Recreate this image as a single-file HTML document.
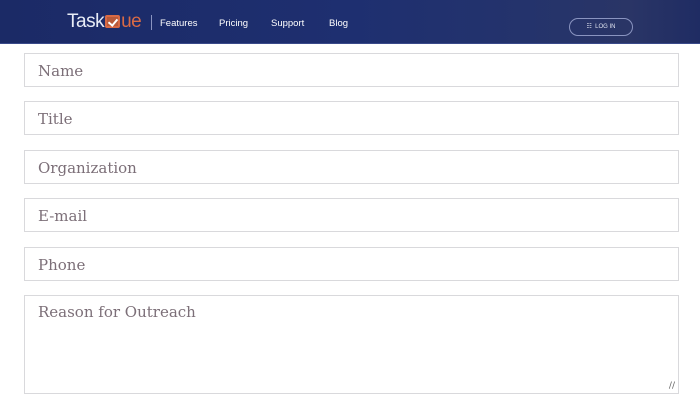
<!DOCTYPE html>
<html><head><meta charset="utf-8"><style>
*{box-sizing:border-box;margin:0;padding:0}
body{width:700px;height:400px;background:#fff;overflow:hidden;position:relative;font-family:"Liberation Sans",sans-serif}
.hdr{position:absolute;left:0;top:0;width:700px;height:44px;background:linear-gradient(90deg,#1b2a66 0%,#1e2f70 50%,#24336c 75%,#2a3566 90%,#1f2c63 100%);border-bottom:1px solid #3a4a8a}
.logo{position:absolute;left:67px;top:11px;font-size:19px;color:#e8ecf6;letter-spacing:-0.5px;font-weight:300}
.logo .q{color:#d96a45}
.box{display:inline-block;width:15px;height:13px;border:2px solid #d96a45;border-radius:2px;vertical-align:-1px;margin:0 1px;position:relative;background:#b85a3a}
.box:after{content:"";position:absolute;left:3px;top:0px;width:4px;height:7px;border:solid #fff;border-width:0 2px 2px 0;transform:rotate(40deg)}
.sep{position:absolute;left:151px;top:15px;width:1px;height:15px;background:#8a94c0}
.nav{position:absolute;top:18px;font-size:9.5px;color:#fff}
.login{position:absolute;left:569px;top:18px;width:64px;height:18px;border:1px solid #8a94c0;border-radius:9px;font-size:6px;color:#dfe3f0;text-align:center;line-height:16px}
.f{position:absolute;left:24px;width:655px;border:1px solid #d9d9dc;font-family:"DejaVu Serif",serif;font-size:15px;color:#7c6f78;padding-left:13px}
.in{height:34px;line-height:34px}
.ta{height:99px;padding-top:7px}
.grip{position:absolute;right:3px;bottom:2px;font-size:9px;color:#666;font-family:"DejaVu Sans",sans-serif}
</style></head><body>
<div class="hdr">
<div class="logo">Task<span class="box"></span><span class="q">ue</span></div>
<div class="sep"></div>
<div class="nav" style="left:160px">Features</div>
<div class="nav" style="left:219px">Pricing</div>
<div class="nav" style="left:271px">Support</div>
<div class="nav" style="left:329px">Blog</div>
<div class="login">&#9783;&nbsp;&nbsp;LOG IN</div>
</div>
<div class="f in" style="top:53px">Name</div>
<div class="f in" style="top:101px">Title</div>
<div class="f in" style="top:150px">Organization</div>
<div class="f in" style="top:198px">E-mail</div>
<div class="f in" style="top:247px">Phone</div>
<div class="f ta" style="top:295px">Reason for Outreach<span class="grip">//</span></div>
</body></html>
